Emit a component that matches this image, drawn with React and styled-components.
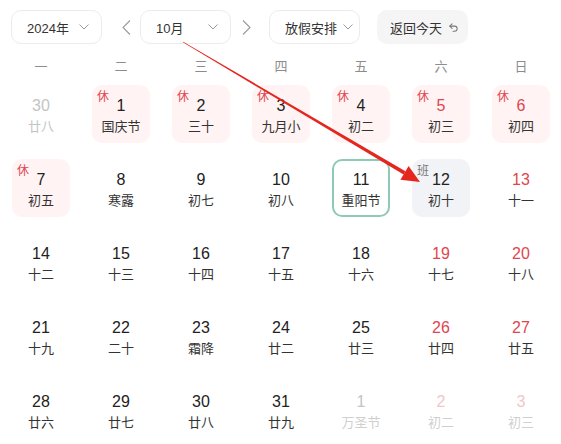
import React from "react";
import styled, { createGlobalStyle, css } from "styled-components";

const Global = createGlobalStyle`
  html, body { margin: 0; padding: 0; background: #fff; }
  body { font-family: "Liberation Sans", Arial, "Noto Sans CJK SC", sans-serif; color: #222; }
`;

const Page = styled.div`
  position: relative;
  width: 561px;
  height: 444px;
  overflow: hidden;
`;

const Toolbar = styled.div`
  display: flex;
  align-items: center;
  padding: 10px 0 0 11px;
  height: 34px;
`;

const Select = styled.div`
  box-sizing: border-box;
  width: 91px;
  height: 34px;
  border: 1px solid #ececec;
  border-radius: 10px;
  display: flex;
  align-items: center;
  justify-content: space-between;
  gap: 4px;
  padding: 0 ${(p) => p.$pr ?? 12}px 0 15px;
  font-size: 13px;
  color: #333;
  margin-left: ${(p) => p.$ml || 0}px;
  background: #fff;
  white-space: nowrap;
`;

const TodayBtn = styled.div`
  box-sizing: border-box;
  width: 91px;
  height: 34px;
  border-radius: 10px;
  background: #f5f5f5;
  display: flex;
  align-items: center;
  padding: 0 0 0 13px;
  gap: 6px;
  font-size: 13px;
  color: #333;
  margin-left: 17px;
`;

const ArrowBtn = styled.div`
  width: 24px;
  height: 34px;
  display: flex;
  align-items: center;
  justify-content: center;
  margin-left: ${(p) => p.$ml}px;
`;

const WeekRow = styled.div`
  display: grid;
  grid-template-columns: repeat(7, 80px);
  padding-left: 1px;
  margin-top: 13px;
  height: 20px;
  line-height: 20px;
`;

const WeekLabel = styled.div`
  text-align: center;
  font-size: 13px;
  color: #8c8c8c;
`;

const Grid = styled.div`
  display: grid;
  grid-template-columns: repeat(7, 80px);
  grid-auto-rows: 74px;
  padding-left: 1px;
`;

const Slot = styled.div`
  display: flex;
  align-items: center;
  justify-content: center;
`;

const Cell = styled.div`
  position: relative;
  box-sizing: border-box;
  width: 58px;
  height: 58px;
  border-radius: 10px;
  display: flex;
  flex-direction: column;
  align-items: center;
  padding-top: 10px;
  ${(p) => p.$kind === "rest" && css`background: #fff3f3;`}
  ${(p) => p.$kind === "work" && css`background: #f1f3f7;`}
  ${(p) => p.$today && css`border: 2px solid #8ecbb2; padding-top: 8px;`}
`;

const DayNum = styled.div`
  font-size: 16px;
  line-height: 22px;
  color: ${(p) => p.$color};
`;

const Lunar = styled.div`
  font-size: 13px;
  line-height: 20px;
  color: ${(p) => p.$color};
`;

const Tag = styled.span`
  position: absolute;
  left: 5px;
  top: 6px;
  font-size: 12px;
  line-height: 12px;
  color: ${(p) => (p.$kind === "rest" ? "#e0454f" : "#777")};
`;

const Overlay = styled.svg`
  position: absolute;
  left: 0;
  top: 0;
  pointer-events: none;
`;

const Chevron = () => (
  <svg width="10" height="6" viewBox="0 0 10 6">
    <polyline points="0.5,0.5 5,5 9.5,0.5" fill="none" stroke="#9a9a9a" strokeWidth="1" />
  </svg>
);

const Side = ({ dir }) => (
  <svg width="9" height="15" viewBox="0 0 9 15">
    <polyline
      points={dir === "left" ? "8,0.5 1,7.5 8,14.5" : "1,0.5 8,7.5 1,14.5"}
      fill="none"
      stroke="#9a9a9a"
      strokeWidth="1.1"
    />
  </svg>
);

const UndoIcon = () => (
  <svg width="11" height="11" viewBox="0 0 24 24" fill="none" stroke="#777" strokeWidth="2.2" strokeLinecap="round" strokeLinejoin="round">
    <path d="M9 14 4 9l5-5" />
    <path d="M4 9h10.5a5.5 5.5 0 0 1 5.5 5.5a5.5 5.5 0 0 1-5.5 5.5H11" />
  </svg>
);

const R = "rest";
const W = "work";
const rows = [
  [
    { d: 30, l: "廿八", m: "prev" },
    { d: 1, l: "国庆节", k: R },
    { d: 2, l: "三十", k: R },
    { d: 3, l: "九月小", k: R },
    { d: 4, l: "初二", k: R },
    { d: 5, l: "初三", k: R, we: 1 },
    { d: 6, l: "初四", k: R, we: 1 },
  ],
  [
    { d: 7, l: "初五", k: R },
    { d: 8, l: "寒露" },
    { d: 9, l: "初七" },
    { d: 10, l: "初八" },
    { d: 11, l: "重阳节", t: 1 },
    { d: 12, l: "初十", k: W },
    { d: 13, l: "十一", we: 1 },
  ],
  [
    { d: 14, l: "十二" },
    { d: 15, l: "十三" },
    { d: 16, l: "十四" },
    { d: 17, l: "十五" },
    { d: 18, l: "十六" },
    { d: 19, l: "十七", we: 1 },
    { d: 20, l: "十八", we: 1 },
  ],
  [
    { d: 21, l: "十九" },
    { d: 22, l: "二十" },
    { d: 23, l: "霜降" },
    { d: 24, l: "廿二" },
    { d: 25, l: "廿三" },
    { d: 26, l: "廿四", we: 1 },
    { d: 27, l: "廿五", we: 1 },
  ],
  [
    { d: 28, l: "廿六" },
    { d: 29, l: "廿七" },
    { d: 30, l: "廿八" },
    { d: 31, l: "廿九" },
    { d: 1, l: "万圣节", m: "next" },
    { d: 2, l: "初二", m: "next", we: 1 },
    { d: 3, l: "初三", m: "next", we: 1 },
  ],
];

function colors(c) {
  if (c.m) {
    return { num: c.we ? "#f2c6cb" : "#c4c4c4", lunar: c.m === "prev" ? "#c4c4c4" : "#cfcfcf" };
  }
  return { num: c.we ? "#e0454f" : "#222", lunar: "#333" };
}

const weekdays = ["一", "二", "三", "四", "五", "六", "日"];

export default function App() {
  return (
    <Page>
      <Global />
      <Toolbar>
        <Select>
          <span>2024年</span>
          <Chevron />
        </Select>
        <ArrowBtn $ml={12}>
          <Side dir="left" />
        </ArrowBtn>
        <Select $ml={2}>
          <span>10月</span>
          <Chevron />
        </Select>
        <ArrowBtn $ml={3}>
          <Side dir="right" />
        </ArrowBtn>
        <Select $ml={11} $pr={6}>
          <span>放假安排</span>
          <Chevron />
        </Select>
        <TodayBtn>
          <span>返回今天</span>
          <UndoIcon />
        </TodayBtn>
      </Toolbar>
      <WeekRow>
        {weekdays.map((w) => (
          <WeekLabel key={w}>{w}</WeekLabel>
        ))}
      </WeekRow>
      <Grid>
        {rows.flat().map((c, i) => {
          const col = colors(c);
          return (
            <Slot key={i}>
              <Cell $kind={c.k} $today={c.t}>
                {c.k && <Tag $kind={c.k}>{c.k === R ? "休" : "班"}</Tag>}
                <DayNum $color={col.num}>{c.d}</DayNum>
                <Lunar $color={col.lunar}>{c.l}</Lunar>
              </Cell>
            </Slot>
          );
        })}
      </Grid>
      <Overlay width="561" height="444" viewBox="0 0 561 444">
        <polygon points="182.8,42.35 183.2,41.65 405.4,171.2 403.6,174.4" fill="#e5261f" />
        <polygon points="420,182 400.4,179.7 408.6,165.9" fill="#e5261f" />
      </Overlay>
    </Page>
  );
}
